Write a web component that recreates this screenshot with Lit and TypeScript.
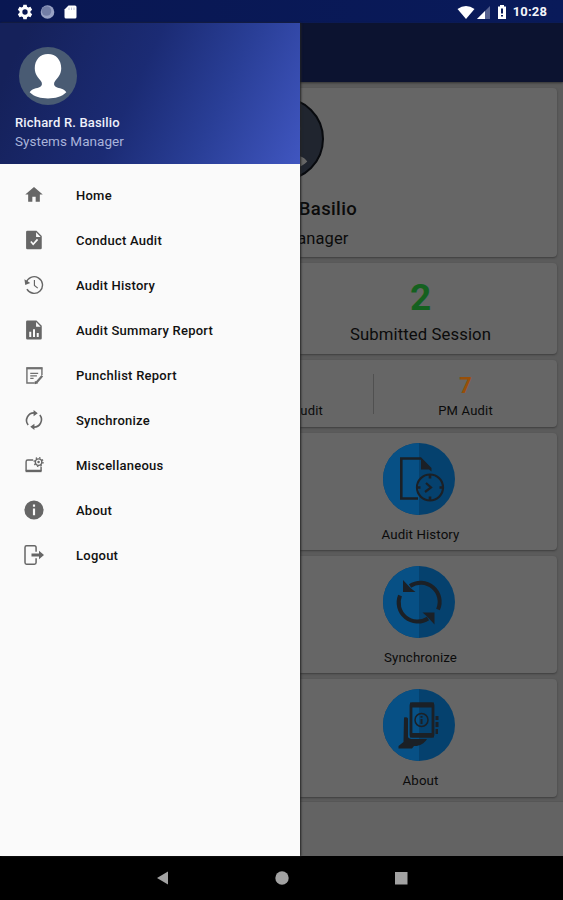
import { LitElement, html, svg, css } from "lit";
import { customElement } from "lit/decorators.js";

const person = svg`<path d="M28.500 7c-8 0-13 6-13 14 0 6 3.500 9.500 6 12.500 1.500 2 1.500 4.500-.5 5.500-4 2-8 1.500-10.500 5.500 4.500 4.500 11 6 18 6s13.500-1.500 18-6c-2.500-4-6.500-3.500-10.500-5.500-2-1-2-3.500-.5-5.500 2.500-3 6-6.500 6-12.500 0-8-5-14-13-14z"/>`;

const menu = [
  { label: "Home", icon: svg`<path d="M10 20v-6h4v6h5v-8.500h3.500L12 2.500 1.500 11.500H5V20z"/>` },
  {
    label: "Conduct Audit",
    icon: svg`<path fill-rule="evenodd" d="M4 .8h11l6.300 6.300v14.600q0 1.500-1.500 1.500H4q-1.500 0-1.500-1.500V2.300Q2.500.8 4 .8zM14.500 2.800v5.500h5.500zM7.500 14.500l3.500 4 6-6.500-1.500-1.500-4.500 5-2-2.300z"/>`,
  },
  {
    label: "Audit History",
    icon: svg`<g fill="none" stroke="#666" stroke-width="1.700"><path d="M2.500 9.500A10 10 0 1 1 3.500 17"/><path d="M12.500 6v6.500l4 3.200" stroke-width="1.400"/></g><path d="M.5 5l1 7 6-2.500z"/>`,
  },
  {
    label: "Audit Summary Report",
    icon: svg`<path fill-rule="evenodd" d="M4 .5h11l6.300 6.300v15.200q0 1.500-1.500 1.500H4q-1.500 0-1.500-1.500V2Q2.500.5 4 .5zM14.500 2.500v5.500h5.500zM6.300 14v6.500h2.400v-6.500zM10.800 11v9.500h2.400v-9.500zM15.300 15.500v5h2.400v-5z"/>`,
  },
  {
    label: "Punchlist Report",
    icon: svg`<g fill="none" stroke="#707070" stroke-width="1.700"><path d="M13 21.500H3.500v-18h18V12"/><path d="M3 4h19" stroke-width="2.400"/><path d="M7.500 10h9.500M7.500 13h8M7.500 16h4" stroke-width="1.300"/><path d="M15 21l7-8" stroke-width="2.600"/></g><path d="M13 23v-4l4 3z"/>`,
  },
  {
    label: "Synchronize",
    icon: svg`<g fill="none" stroke="#666" stroke-width="1.900"><path d="M5 18A9 9 0 0 1 13 3.500M19 6A9 9 0 0 1 11 20.500"/></g><path d="M11.500 0l5 4-5 3.500zM12.500 24l-5-4 5-3.500z"/>`,
  },
  {
    label: "Miscellaneous",
    icon: svg`<g fill="none" stroke="#666" stroke-width="1.700"><path d="M11 6H4.500Q2.500 6 2.500 8V18.500H20.500V14"/><path d="M2 19.500h19" stroke-width="2.200"/><circle cx="17.500" cy="8.500" r="3.900"/><circle cx="17.500" cy="8.500" r="5.300" stroke-dasharray="1.700 2.463" stroke-width="1.600"/></g><circle cx="17.500" cy="8.500" r="1.500"/>`,
  },
  {
    label: "About",
    icon: svg`<path fill-rule="evenodd" d="M12 .5a11.500 11.500 0 1 0 0 23 11.500 11.500 0 0 0 0-23zM10.700 5.300h2.600v2.800h-2.600zM10.700 10.200h2.600v8.200h-2.600z"/>`,
  },
  {
    label: "Logout",
    icon: svg`<path fill="none" stroke="#666" stroke-width="1.800" d="M14.500 8V3Q14.500 1 12.500 1H3Q1.200 1 1.200 3V21Q1.200 23 3 23H12.500Q14.500 23 14.500 21V16"/><path d="M9 10.300H18V7l6 5-6 5v-3.300H9z"/>`,
  },
];

const tiles = [
  {
    label: "Audit History",
    art: svg`<g fill="none" stroke="#1b2026"><path stroke-width="2.600" d="M35 55.500H18.300V15.500H38"/><circle cx="47" cy="44.500" r="13" stroke-width="2.200"/><path stroke-width="2.600" d="M47 32v3.500M47 53.500v4M34.500 44.500h3M56.500 44.500h3"/><path stroke-width="2.200" d="M43 40l5 4.500-6 4.500"/></g><path fill="#1b2026" d="M38 14.200L48.500 25v3.500L46 26.500H38z"/>`,
  },
  {
    label: "Synchronize",
    art: svg`<g fill="none" stroke="#1b2026" stroke-width="4"><path d="M27 20A19 19 0 0 1 55 43.500M17 29.500A19 19 0 0 0 45 52.500"/></g><path fill="#1b2026" d="M20 14v12h12.500l-5-4zM51.500 58.500V46.500H39.500l4.500 4z"/>`,
  },
  {
    label: "About",
    art: svg`<rect x="28" y="15" width="22" height="32" rx="1.500" fill="none" stroke="#1b2026" stroke-width="2.800"/><path fill="#1b2026" d="M27 13.500h24v5H27zM27 44h24v4.500H27zM52.500 27h3v4h-3zM52.500 33h3v5h-3zM52.500 40h2.500v5h-2.500zM21 28.500q3-1 4 1V48q1 2 5 2h14c-3 5-7 6-10 7H31l-2 2.500H15.500V57l5-4z"/><circle cx="38.500" cy="31" r="6.500" fill="none" stroke="#1b2026" stroke-width="1.500"/><path stroke="#1b2026" stroke-width="2" d="M38.500 27v1.800M38.500 30v5"/>`,
  },
];

@customElement("app-root")
export class AppRoot extends LitElement {
  static styles = css`
    :host {
      display: flex;
      flex-direction: column;
      position: relative;
      width: 563px;
      height: 900px;
      overflow: hidden;
      font-family: Roboto, "Liberation Sans", sans-serif;
      color: #0b0b0b;
    }
    * { box-sizing: border-box; }
    svg { display: block; flex: none; }
    .status {
      height: 23px;
      background: linear-gradient(90deg, #091752, #091a5a);
      display: flex;
      align-items: center;
      padding: 0 16px 0 17px;
      color: #f4f5fa;
      font-size: 13px;
      font-weight: 700;
      letter-spacing: 0.15px;
    }
    .grow { flex: 1; }
    .appbar { height: 59px; background: #0c1330; box-shadow: 0 1px 2px #333; z-index: 1; }
    .content {
      flex: 1;
      background: #5b5b5b;
      padding: 6px 6px 0;
      display: grid;
      grid-template-rows: 169px 91px 67px 117px 117px 118px;
      grid-template-columns: 1fr;
      row-gap: 6px;
    }
    .card {
      background: #666;
      border-radius: 4px;
      box-shadow: 0 1px 2px #3d3d3d;
      display: flex;
      flex-direction: column;
      align-items: center;
    }
    .row { display: grid; grid-template-columns: 1fr 1fr; column-gap: 5px; }
    .avatar {
      width: 84px;
      height: 84px;
      margin-top: 9px;
      border-radius: 50%;
      border: 2px solid #080a0e;
      background: #20252f;
      display: flex;
    }
    .big { font-size: 18.500px; font-weight: 500; line-height: 24px; margin-top: 16px; letter-spacing: 0.35px; }
    .role { font-size: 16.500px; line-height: 20px; margin-top: 8px; letter-spacing: 0.1px; }
    .count { font-size: 37px; font-weight: 700; line-height: 40px; margin-top: 15px; color: #14611f; }
    .session { font-size: 16.700px; line-height: 20px; margin-top: 7px; letter-spacing: 0.1px; }
    .thirds { flex-direction: row; align-items: center; }
    .third { flex: 1 1 0; min-width: 0; height: 67px; display: flex; flex-direction: column; align-items: center; justify-content: flex-end; padding-bottom: 8px; }
    .middle { align-items: flex-end; }
    .middle .small { margin-right: 49px; }
    .seven { font-size: 22px; font-weight: 700; line-height: 26px; color: #984f08; margin-bottom: 4px; }
    .small { font-size: 13px; line-height: 16px; letter-spacing: 0.2px; }
    .rule { width: 1px; height: 40px; margin-left: 1px; background: #505050; }
    .disc { margin-top: 10px; margin-right: 3px; }
    .tile { font-size: 13.300px; line-height: 16px; margin-top: 12px; letter-spacing: 0.1px; }
    .footer { height: 55px; background: #636363; border-top: 1px solid #565656; }
    .nav {
      height: 44px;
      background: #000;
      display: flex;
      justify-content: center;
      align-items: center;
      gap: 105px;
    }
    .drawer {
      position: absolute;
      z-index: 2;
      left: 0;
      top: 23px;
      width: 300px;
      height: 833px;
      background: #fafafa;
      box-shadow: 1px 0 2px #222;
    }
    .header {
      height: 141px;
      padding: 24px 15px 0;
      background: linear-gradient(115deg, #15215a 8%, #1b2b74 45%, #293e96 70%, #4056c0 100%);
      color: #eef0fa;
      margin-bottom: 9px;
    }
    .face {
      width: 58px;
      height: 58px;
      margin-left: 4px;
      border-radius: 50%;
      background: #495b73;
    }
    .name { font-size: 13px; font-weight: 500; line-height: 18px; margin-top: 9px; letter-spacing: 0.17px; }
    .job { font-size: 13.500px; line-height: 18px; color: #a9b3da; letter-spacing: 0.03px; }
    .item {
      height: 45px;
      display: flex;
      align-items: center;
      padding-left: 24px;
      gap: 32px;
      font-size: 13px;
      font-weight: 500;
      color: #111;
      letter-spacing: 0.25px;
    }
    .item svg { margin-bottom: 1px; }
  `;

  private tile(t: (typeof tiles)[number]) {
    return html`<div class="row">
      <div class="card"></div>
      <div class="card">
        <svg class="disc" width="72" height="72" viewBox="0 0 72 72">
          <circle cx="36" cy="36" r="36" fill="#05416e" />
          <path d="M36 0a36 36 0 0 0 0 72z" fill="#075085" />
          ${t.art}
        </svg>
        <div class="tile">${t.label}</div>
      </div>
    </div>`;
  }

  render() {
    return html`
      <div class="status">
        <svg width="16" height="16" viewBox="0 0 24 24" fill="#fff">
          <path fill-rule="evenodd" d="M9.500 1h5l.6 3.300 2 1.100 3.100-1.200L22.700 8.500l-2.500 2.200v2.600l2.500 2.200-2.500 4.300-3.100-1.200-2 1.100-.6 3.300h-5l-.6-3.300-2-1.100-3.100 1.200-2.500-4.300 2.500-2.200v-2.600L1.300 8.500l2.500-4.300 3.100 1.200 2-1.100zM12 8a4 4 0 1 0 0 8 4 4 0 0 0 0-8z"/>
        </svg>
        <svg width="46" height="16" viewBox="0 0 46 16">
          <circle cx="14.500" cy="8" r="6.800" fill="#99a2c4"/>
          <circle cx="13.500" cy="7" r="4.800" fill="#737ea6"/>
          <path d="M35.500 1.500H42q1.500 0 1.500 1.500v10q0 1.500-1.500 1.500H33q-1.500 0-1.500-1.500V5.500z" fill="#fff"/>
          <path d="M36 3.500v2.500M38.500 3.500v2.500M41 3.500v2.500" stroke="#c3c8dc"/>
        </svg>
        <div class="grow"></div>
        <svg width="56" height="18" viewBox="0 0 56 18">
          <path d="M.5 6Q9 0 17.500 6L9 16z" fill="#fff"/>
          <path d="M33 3v13H20z" fill="#56618f"/>
          <path d="M28 8v8h-8z" fill="#fff"/>
          <path d="M43 2h4v1.500h2V16h-8V3.500h2z" fill="#fff"/>
          <path d="M45 5.500v5M45 12v1.500" stroke="#091a5a" stroke-width="2"/>
        </svg>
        <span>10:28</span>
      </div>
      <div class="appbar"></div>
      <div class="content">
        <div class="card">
          <div class="avatar"><svg width="80" height="80" viewBox="0 0 57 57" fill="#666">${person}</svg></div>
          <div class="big">Richard R. Basilio</div>
          <div class="role">Systems Manager</div>
        </div>
        <div class="row">
          <div class="card"></div>
          <div class="card">
            <div class="count">2</div>
            <div class="session">Submitted Session</div>
          </div>
        </div>
        <div class="card thirds">
          <div class="third"></div>
          <div class="third middle"><div class="small">Audit</div></div>
          <div class="rule"></div>
          <div class="third"><div class="seven">7</div><div class="small">PM Audit</div></div>
        </div>
        ${tiles.map((t) => this.tile(t))}
      </div>
      <div class="footer"></div>
      <div class="nav">
        <svg width="14" height="14" viewBox="0 0 14 14" fill="#a2a2a2"><path d="M1 7L12 .5v13z"/></svg>
        <svg width="14" height="14" viewBox="0 0 14 14" fill="#a2a2a2"><circle cx="7" cy="7" r="6.700"/></svg>
        <svg width="14" height="14" viewBox="0 0 14 14" fill="#a2a2a2"><path d="M1 1h12.500v12.500H1z"/></svg>
      </div>
      <div class="drawer">
        <div class="header">
          <div class="face"><svg width="58" height="58" viewBox="0 0 57 57" fill="#fff">${person}</svg></div>
          <div class="name">Richard R. Basilio</div>
          <div class="job">Systems Manager</div>
        </div>
        ${menu.map(
          (m) => html`<div class="item">
            <svg width="20" height="20" viewBox="0 0 24 24" fill="#666">${m.icon}</svg>
            <span>${m.label}</span>
          </div>`
        )}
      </div>
    `;
  }
}
